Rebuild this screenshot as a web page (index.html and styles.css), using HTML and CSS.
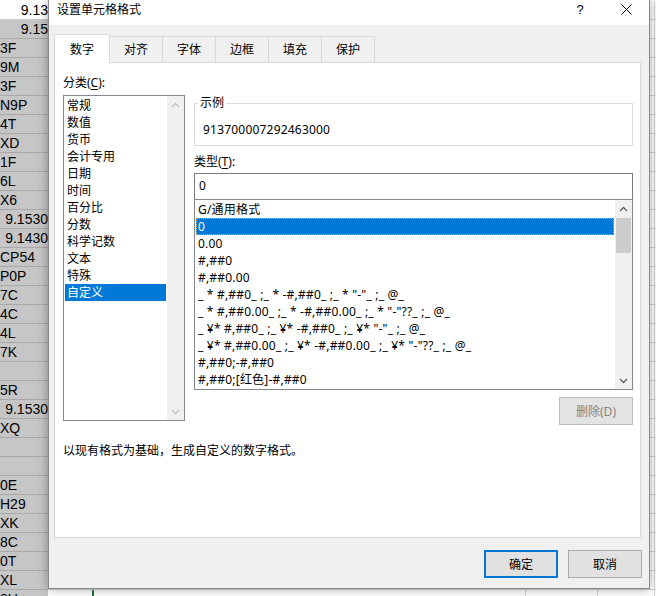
FILE: index.html
```html
<!DOCTYPE html>
<html lang="zh-CN">
<head>
    <meta charset="UTF-8">
    <title>设置单元格格式</title>
    <link rel="stylesheet" href="styles.css">
</head>
<body>
    <!-- worksheet behind the dialog -->
    <div class="sheet">
        <div class="row first"><div class="cell a num">9.13</div><div class="cell b"></div><div class="cell c"></div><div class="cell d"></div><div class="cell e"></div></div>
        <div class="row"><div class="cell a num">9.15</div><div class="cell b"></div><div class="cell c"></div><div class="cell d"></div><div class="cell e"></div></div>
        <div class="row"><div class="cell a">3F</div><div class="cell b"></div><div class="cell c"></div><div class="cell d"></div><div class="cell e"></div></div>
        <div class="row"><div class="cell a">9M</div><div class="cell b"></div><div class="cell c"></div><div class="cell d"></div><div class="cell e"></div></div>
        <div class="row"><div class="cell a">3F</div><div class="cell b"></div><div class="cell c"></div><div class="cell d"></div><div class="cell e"></div></div>
        <div class="row"><div class="cell a">N9P</div><div class="cell b"></div><div class="cell c"></div><div class="cell d"></div><div class="cell e"></div></div>
        <div class="row"><div class="cell a">4T</div><div class="cell b"></div><div class="cell c"></div><div class="cell d"></div><div class="cell e"></div></div>
        <div class="row"><div class="cell a">XD</div><div class="cell b"></div><div class="cell c"></div><div class="cell d"></div><div class="cell e"></div></div>
        <div class="row"><div class="cell a">1F</div><div class="cell b"></div><div class="cell c"></div><div class="cell d"></div><div class="cell e"></div></div>
        <div class="row"><div class="cell a">6L</div><div class="cell b"></div><div class="cell c"></div><div class="cell d"></div><div class="cell e"></div></div>
        <div class="row"><div class="cell a">X6</div><div class="cell b"></div><div class="cell c"></div><div class="cell d"></div><div class="cell e"></div></div>
        <div class="row"><div class="cell a num">9.1530</div><div class="cell b"></div><div class="cell c"></div><div class="cell d"></div><div class="cell e"></div></div>
        <div class="row"><div class="cell a num">9.1430</div><div class="cell b"></div><div class="cell c"></div><div class="cell d"></div><div class="cell e"></div></div>
        <div class="row"><div class="cell a">CP54</div><div class="cell b"></div><div class="cell c"></div><div class="cell d"></div><div class="cell e"></div></div>
        <div class="row"><div class="cell a">P0P</div><div class="cell b"></div><div class="cell c"></div><div class="cell d"></div><div class="cell e"></div></div>
        <div class="row"><div class="cell a">7C</div><div class="cell b"></div><div class="cell c"></div><div class="cell d"></div><div class="cell e"></div></div>
        <div class="row"><div class="cell a">4C</div><div class="cell b"></div><div class="cell c"></div><div class="cell d"></div><div class="cell e"></div></div>
        <div class="row"><div class="cell a">4L</div><div class="cell b"></div><div class="cell c"></div><div class="cell d"></div><div class="cell e"></div></div>
        <div class="row"><div class="cell a">7K</div><div class="cell b"></div><div class="cell c"></div><div class="cell d"></div><div class="cell e"></div></div>
        <div class="row"><div class="cell a"></div><div class="cell b"></div><div class="cell c"></div><div class="cell d"></div><div class="cell e"></div></div>
        <div class="row"><div class="cell a">5R</div><div class="cell b"></div><div class="cell c"></div><div class="cell d"></div><div class="cell e"></div></div>
        <div class="row"><div class="cell a num">9.1530</div><div class="cell b"></div><div class="cell c"></div><div class="cell d"></div><div class="cell e"></div></div>
        <div class="row"><div class="cell a">XQ</div><div class="cell b"></div><div class="cell c"></div><div class="cell d"></div><div class="cell e"></div></div>
        <div class="row"><div class="cell a"></div><div class="cell b"></div><div class="cell c"></div><div class="cell d"></div><div class="cell e"></div></div>
        <div class="row"><div class="cell a"></div><div class="cell b"></div><div class="cell c"></div><div class="cell d"></div><div class="cell e"></div></div>
        <div class="row"><div class="cell a">0E</div><div class="cell b"></div><div class="cell c"></div><div class="cell d"></div><div class="cell e"></div></div>
        <div class="row"><div class="cell a">H29</div><div class="cell b"></div><div class="cell c"></div><div class="cell d"></div><div class="cell e"></div></div>
        <div class="row"><div class="cell a">XK</div><div class="cell b"></div><div class="cell c"></div><div class="cell d"></div><div class="cell e"></div></div>
        <div class="row"><div class="cell a">8C</div><div class="cell b"></div><div class="cell c"></div><div class="cell d"></div><div class="cell e"></div></div>
        <div class="row"><div class="cell a">0T</div><div class="cell b"></div><div class="cell c"></div><div class="cell d"></div><div class="cell e"></div></div>
        <div class="row"><div class="cell a">XL</div><div class="cell b selected"></div><div class="cell c"></div><div class="cell d"></div><div class="cell e"></div></div>
        <div class="row"><div class="cell a">8U</div><div class="cell b selected"></div><div class="cell c"></div><div class="cell d"></div><div class="cell e"></div></div>
    </div>

    <div class="dialog">
        <div class="titlebar">
            <span class="title">设置单元格格式</span>
            <span class="tb-btn help">?</span>
            <span class="tb-btn close">
                <svg width="11" height="11" viewBox="0 0 11 11"><path d="M0.5 0.5 L10.5 10.5 M10.5 0.5 L0.5 10.5" stroke="#000" stroke-width="1" fill="none"/></svg>
            </span>
        </div>

        <div class="dlg-body">
            <div class="tabs">
                <div class="tab active">数字</div>
                <div class="tab">对齐</div>
                <div class="tab">字体</div>
                <div class="tab">边框</div>
                <div class="tab">填充</div>
                <div class="tab">保护</div>
            </div>

            <div class="panel">
                <div class="panel-top">
                    <div class="col-left">
                        <div class="label">分类(<u>C</u>):</div>
                        <div class="listbox cat-list">
                            <ul class="items">
                                <li>常规</li>
                                <li>数值</li>
                                <li>货币</li>
                                <li>会计专用</li>
                                <li>日期</li>
                                <li>时间</li>
                                <li>百分比</li>
                                <li>分数</li>
                                <li>科学记数</li>
                                <li>文本</li>
                                <li>特殊</li>
                                <li class="sel">自定义</li>
                            </ul>
                            <div class="vscroll off">
                                <span class="arrow"><svg class="chev" width="9" height="6" viewBox="0 0 9 6"><path d="M1 5 L4.5 1.5 L8 5" /></svg></span>
                                <span class="track"></span>
                                <span class="arrow"><svg class="chev" width="9" height="6" viewBox="0 0 9 6"><path d="M1 1 L4.5 4.5 L8 1" /></svg></span>
                            </div>
                        </div>
                    </div>

                    <div class="col-right">
                        <fieldset class="sample">
                            <legend>示例</legend>
                            <div class="sample-val">913700007292463000</div>
                        </fieldset>
                        <div class="label type-label">类型(<u>T</u>):</div>
                        <div class="textbox">0</div>
                        <div class="listbox type-list">
                            <ul class="items">
                                <li>G/通用格式</li>
                                <li class="sel focus">0</li>
                                <li>0.00</li>
                                <li>#,##0</li>
                                <li>#,##0.00</li>
                                <li>_ * #,##0_ ;_ * -#,##0_ ;_ * "-"_ ;_ @_</li>
                                <li>_ * #,##0.00_ ;_ * -#,##0.00_ ;_ * "-"??_ ;_ @_</li>
                                <li>_ ¥* #,##0_ ;_ ¥* -#,##0_ ;_ ¥* "-"_ ;_ @_</li>
                                <li>_ ¥* #,##0.00_ ;_ ¥* -#,##0.00_ ;_ ¥* "-"??_ ;_ @_</li>
                                <li>#,##0;-#,##0</li>
                                <li>#,##0;[红色]-#,##0</li>
                            </ul>
                            <div class="vscroll">
                                <span class="arrow"><svg class="chev" width="9" height="6" viewBox="0 0 9 6"><path d="M1 5 L4.5 1.5 L8 5" /></svg></span>
                                <span class="track"><span class="thumb"></span></span>
                                <span class="arrow"><svg class="chev" width="9" height="6" viewBox="0 0 9 6"><path d="M1 1 L4.5 4.5 L8 1" /></svg></span>
                            </div>
                        </div>
                        <div class="btn-row">
                            <button class="btn" disabled>删除(D)</button>
                        </div>
                    </div>
                </div>
                <p class="desc">以现有格式为基础，生成自定义的数字格式。</p>
            </div>

            <div class="dlg-buttons">
                <button class="btn default">确定</button>
                <button class="btn">取消</button>
            </div>
        </div>
    </div>
</body>
</html>
```

FILE: styles.css
```css
body {
    margin: 0;
    width: 656px;
    height: 596px;
    overflow: hidden;
    position: relative;
    background: #fff;
    font-family: "Noto Sans", "Noto Sans CJK SC", sans-serif;
    font-size: 12px;
    color: #000;
}

/* worksheet */
.sheet {
    padding-top: 1px;
    font-family: "Liberation Sans", Arial, sans-serif;
    font-size: 14px;
}

.row {
    display: flex;
    height: 19px;
    box-sizing: border-box;
    border-bottom: 1px solid #d4d4d4;
}

.cell {
    height: 18px;
    line-height: 18px;
    box-sizing: border-box;
    border-right: 1px solid #d4d4d4;
    overflow: hidden;
    white-space: nowrap;
}

.cell.a {
    width: 48px;
    background: #c6c6c6;
    border-right: none;
    border-bottom: 1px solid #a8a8a8;
    height: 19px;
}

.row.first .cell.a {
    background: #fff;
    border-bottom-color: #c8c8c8;
}

.cell.num {
    text-align: right;
}

.cell.b { width: 46px; }
.cell.c { width: 432px; }
.cell.d { width: 72px; }
.cell.e { width: 57px; }

.cell.b.selected {
    border-right: 2px solid #217346;
}

/* dialog window */
.dialog {
    position: absolute;
    left: 48px;
    top: -1px;
    width: 602px;
    height: 590px;
    box-sizing: border-box;
    border: 1px solid #8a8a8a;
    background: #f0f0f0;
    box-shadow: 0 0 10px rgba(0, 0, 0, 0.35);
}

.titlebar {
    display: flex;
    height: 25px;
    background: #fff;
}

.title {
    flex: 1;
    padding: 2px 0 0 8px;
    line-height: 16px;
}

.tb-btn {
    width: 46px;
    display: flex;
    justify-content: center;
    padding-top: 3px;
    height: 22px;
}

.tb-btn.help {
    font-family: "Liberation Sans", sans-serif;
    font-size: 13px;
    line-height: 14px;
}

.tb-btn.close svg {
    margin-top: 1px;
}

.dlg-body {
    padding: 9px 7px 0 5px;
}

/* tabs */
.tabs {
    display: flex;
    align-items: flex-end;
    height: 28px;
}

.tab {
    height: 26px;
    line-height: 25px;
    padding: 0 14px;
    box-sizing: border-box;
    border: 1px solid #d9d9d9;
    border-bottom: none;
    margin-right: -1px;
    background: #f0f0f0;
}

.tab.active {
    position: relative;
    z-index: 1;
    height: 29px;
    line-height: 29px;
    width: 56px;
    padding: 0;
    text-align: center;
    margin-bottom: -1px;
    background: #fff;
}

.panel {
    height: 476px;
    width: 587px;
    box-sizing: border-box;
    border: 1px solid #d9d9d9;
    background: #fff;
    padding: 12px 7px 0 8px;
}

.panel-top {
    display: flex;
    gap: 9px;
}

.label {
    line-height: 16px;
    height: 16px;
}

.label u {
    text-underline-offset: 2px;
}

.col-left {
    width: 122px;
}

.col-left .label {
    margin-bottom: 4px;
}

.col-right {
    width: 439px;
    margin-top: 20px;
    display: flex;
    flex-direction: column;
}

/* list boxes */
.listbox {
    display: flex;
    box-sizing: border-box;
    border: 1px solid #828790;
    background: #fff;
}

.items {
    flex: 1;
    list-style: none;
    margin: 0;
    padding: 1px;
    overflow: hidden;
}

.items li {
    height: 17px;
    line-height: 17px;
    padding-left: 2px;
    white-space: pre;
}

.type-list .items li,
.sample-val {
    letter-spacing: 0.2px;
}

.items li.sel {
    background: #0078d7;
    color: #fff;
}

.items li.focus {
    outline: 1px dotted #e6a55a;
    outline-offset: -1px;
}

.cat-list {
    height: 326px;
}

.type-list {
    height: 191px;
}

.vscroll {
    width: 17px;
    display: flex;
    flex-direction: column;
    background: #f0f0f0;
}

.vscroll .arrow {
    height: 17px;
    display: flex;
    align-items: center;
    justify-content: center;
}

.vscroll .track {
    flex: 1;
}

.vscroll .thumb {
    display: block;
    height: 35px;
    margin: 1px 1px 0;
    background: #cdcdcd;
}

.chev path {
    fill: none;
    stroke: #606060;
    stroke-width: 1.3;
}

.vscroll.off .chev path {
    stroke: #c0c0c0;
}

/* sample group */
.sample {
    margin: 0;
    padding: 0 8px 7px;
    border: 1px solid #dcdcdc;
}

.sample legend {
    margin-left: -5px;
    padding: 0 2px;
    line-height: 16px;
    height: 16px;
}

.sample-val {
    margin-top: 11px;
    line-height: 16px;
}

.type-label {
    margin-top: 8px;
}

.textbox {
    margin-top: 3px;
    height: 26px;
    box-sizing: border-box;
    border: 1px solid #7a7a7a;
    border-bottom: none;
    padding-left: 4px;
    line-height: 24px;
}

/* buttons */
.btn {
    width: 74px;
    height: 28px;
    box-sizing: border-box;
    border: 1px solid #adadad;
    background: #e1e1e1;
    font-family: "Noto Sans", "Noto Sans CJK SC", sans-serif;
    font-size: 12px;
    color: #000;
    padding: 0;
}

.btn:disabled {
    color: #838383;
    border-color: #bfbfbf;
    background: #e3e3e3;
}

.btn.default {
    border: 2px solid #0078d7;
}

.btn-row {
    display: flex;
    justify-content: flex-end;
    margin-top: 7px;
}

.desc {
    margin: 18px 0 0;
    line-height: 16px;
}

.dlg-buttons {
    display: flex;
    justify-content: flex-end;
    gap: 10px;
    margin-top: 12px;
}
```
